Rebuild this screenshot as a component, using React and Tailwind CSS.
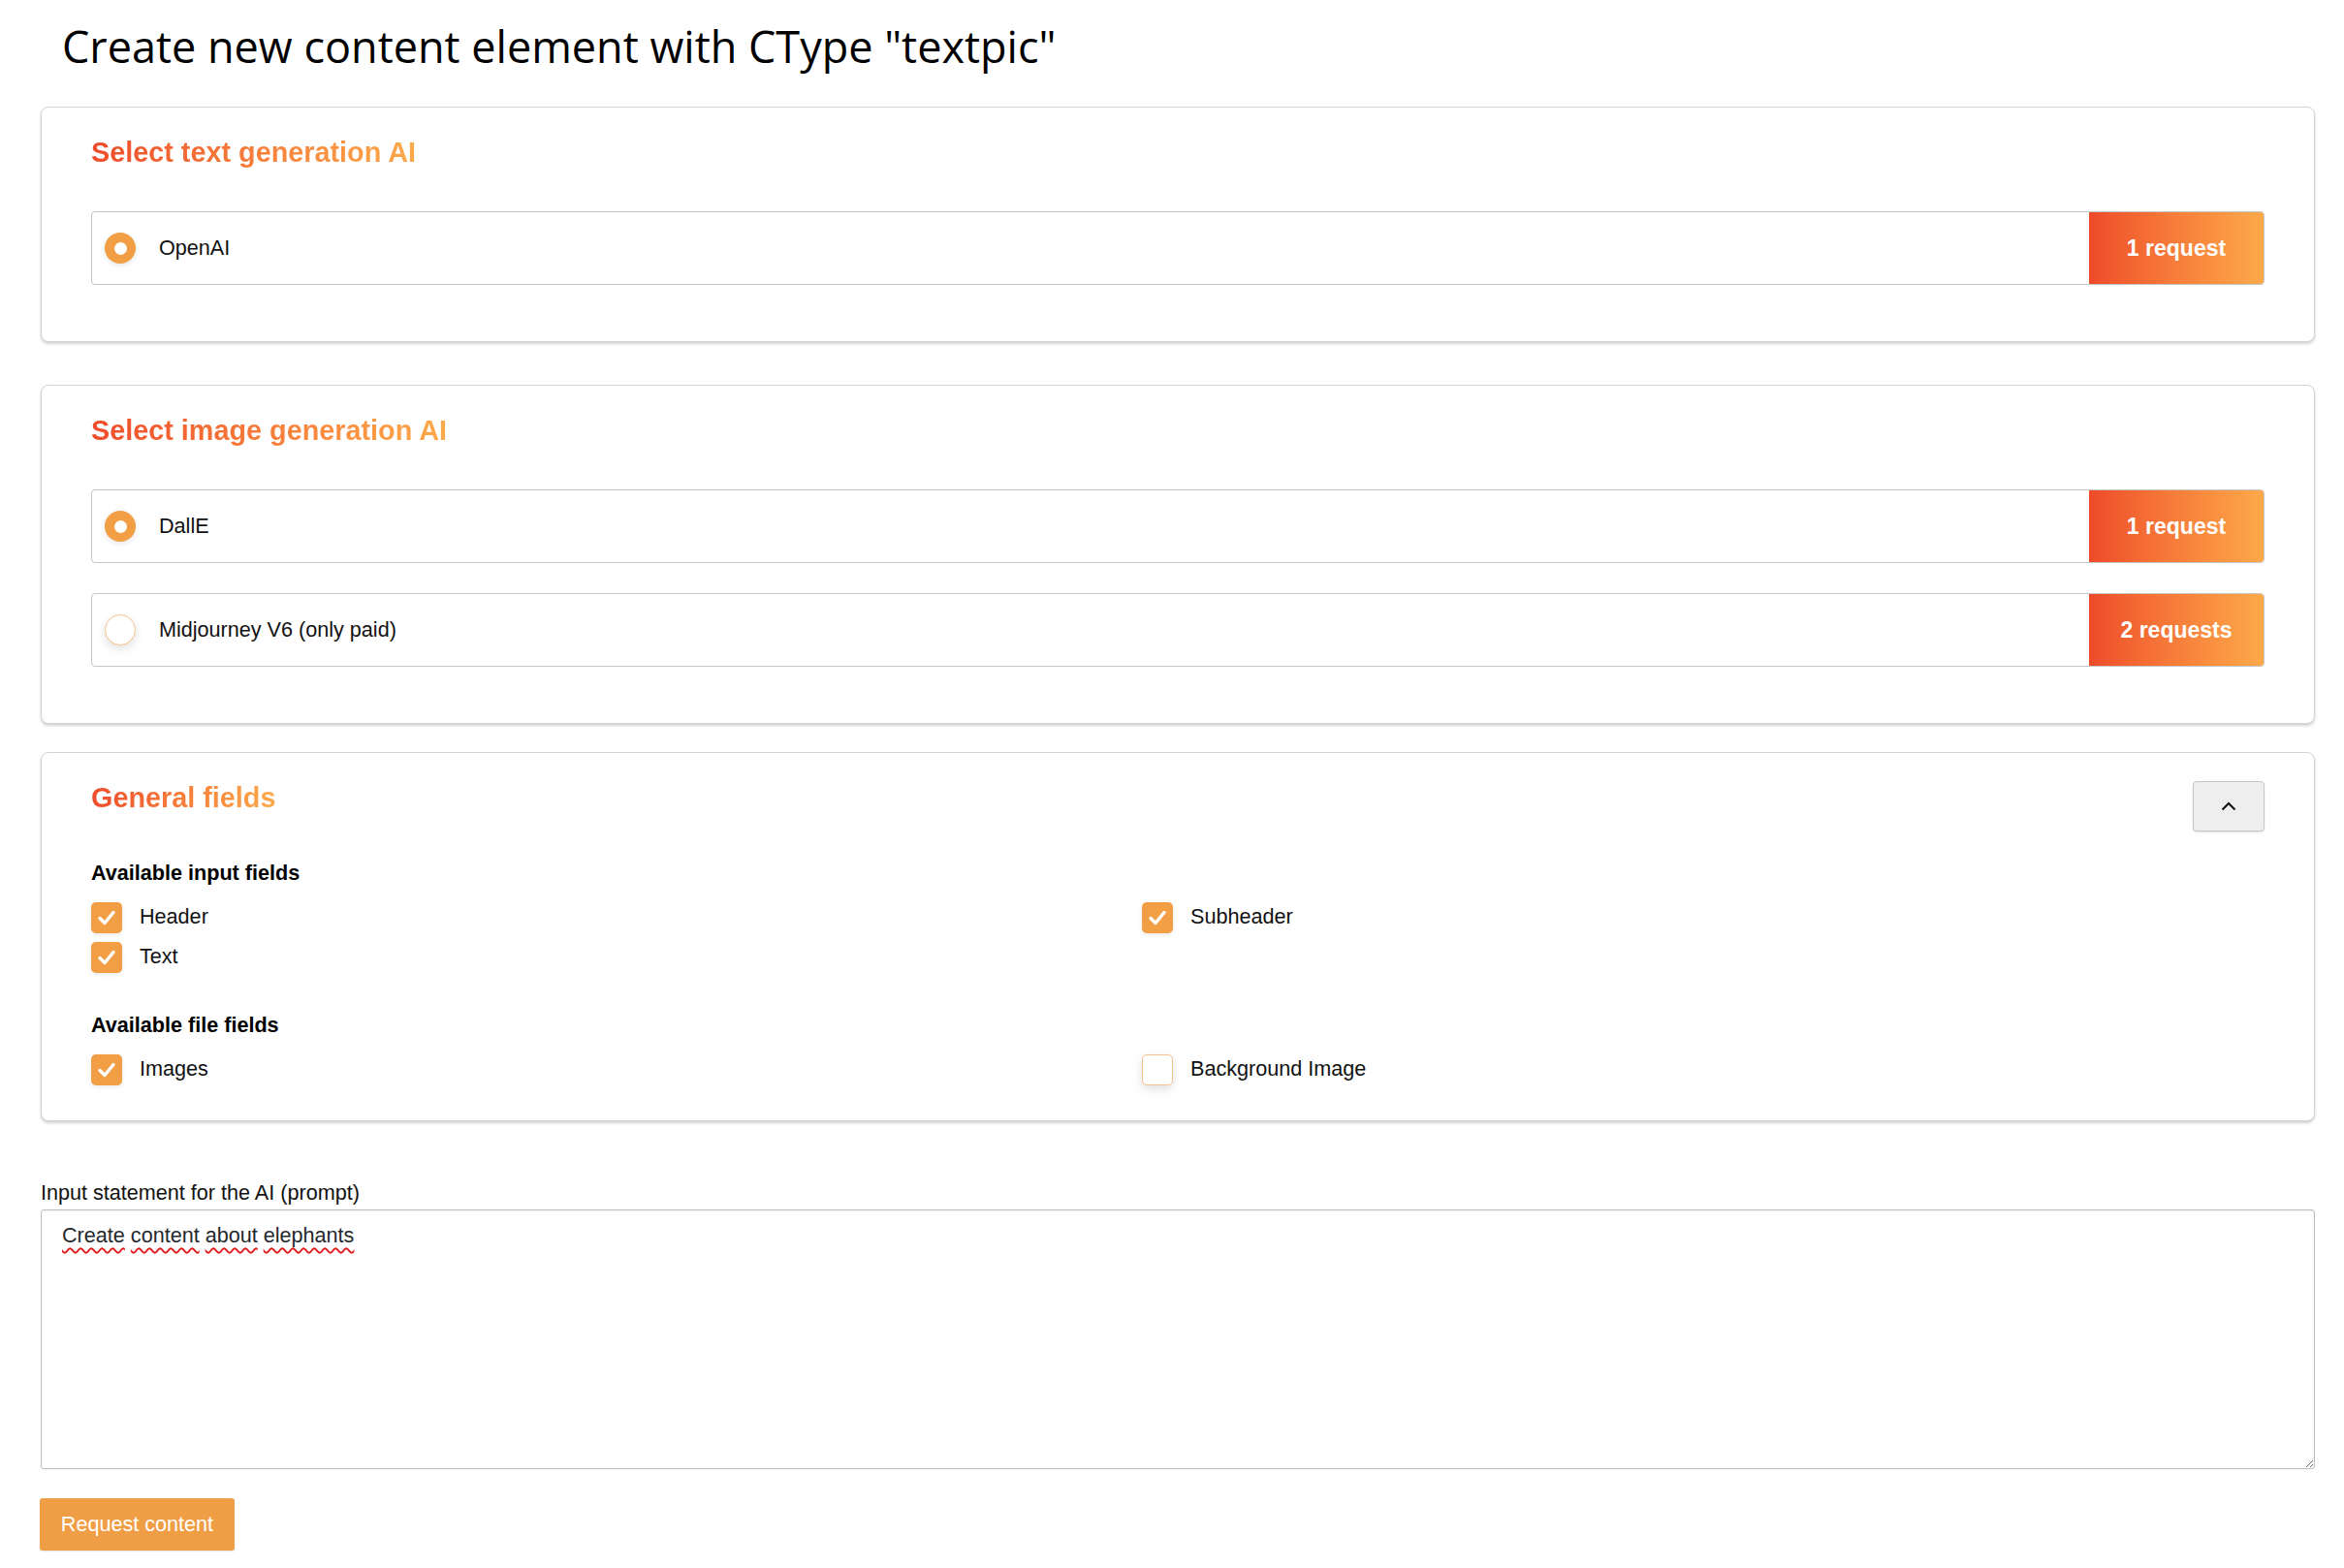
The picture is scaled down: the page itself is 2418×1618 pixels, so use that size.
import React from "react";

function Radio({ checked }) {
  if (checked) {
    return (
      <div className="w-[32px] h-[32px] rounded-full bg-[#f19e45] flex items-center justify-center shrink-0 shadow-[0_2px_6px_rgba(0,0,0,0.10)]">
        <div className="w-[13px] h-[13px] rounded-full bg-white" />
      </div>
    );
  }
  return (
    <div className="w-[32px] h-[32px] rounded-full bg-white border border-[#f6c28c] shrink-0 shadow-[0_4px_10px_rgba(0,0,0,0.12)]" />
  );
}

function Checkbox({ checked }) {
  if (checked) {
    return (
      <div className="w-[32px] h-[32px] rounded-[5px] bg-[#f19e45] flex items-center justify-center shrink-0 shadow-[0_2px_5px_rgba(0,0,0,0.08)]">
        <svg width="22" height="22" viewBox="0 0 22 22" fill="none">
          <path d="M4 11.5 L9 16.5 L18 5.5" stroke="white" strokeWidth="3.4" strokeLinecap="round" strokeLinejoin="round" />
        </svg>
      </div>
    );
  }
  return (
    <div className="w-[32px] h-[32px] rounded-[5px] bg-white border border-[#f6c28c] shrink-0 shadow-[0_4px_10px_rgba(0,0,0,0.12)]" />
  );
}

function OptionRow({ label, badge, checked }) {
  return (
    <div className="flex h-[76px] border border-[#c4c4c4] rounded-[4px] bg-white overflow-hidden">
      <div className="flex-1 flex items-center pl-[13px] gap-[24px]">
        <Radio checked={checked} />
        <span className="text-[21.6px] text-[#111]">{label}</span>
      </div>
      <div className="w-[180px] flex items-center justify-center bg-linear-to-r from-[#ee4a2a] to-[#fca94a] text-white font-bold text-[23px]">
        {badge}
      </div>
    </div>
  );
}

function Heading({ children }) {
  return (
    <h2 className="text-[28.8px] leading-[34px] font-bold">
      <span className="inline-block bg-linear-to-r from-[#ee4a2a] to-[#fca94a] bg-clip-text text-transparent">
        {children}
      </span>
    </h2>
  );
}

function CheckItem({ label, checked }) {
  return (
    <div className="flex items-center gap-[18px] h-[33px]">
      <Checkbox checked={checked} />
      <span className="text-[21.6px] text-[#111]">{label}</span>
    </div>
  );
}

const cardCls =
  "border border-[#d3d3d3] rounded-[8px] bg-white shadow-[0_2px_3px_rgba(0,0,0,0.18)] px-[51px] pt-[29px]";

export default function App() {
  const words = ["Create", "content", "about", "elephants"];
  return (
    <div
      className="min-h-screen bg-white pl-[42px] pr-[30px] text-black"
      style={{ fontFamily: '"Liberation Sans", Arial, sans-serif' }}
    >
      <h1
        className="pl-[22px] pt-[20px] text-[45px] leading-[56px] font-normal text-black"
        style={{ fontFamily: '"Open Sans", "Noto Sans", sans-serif' }}
      >
        Create new content element with CType "textpic"
      </h1>

      <section className={cardCls + " mt-[34px] pb-[58px]"}>
        <Heading>Select text generation AI</Heading>
        <div className="mt-[44px] flex flex-col gap-[31px]">
          <OptionRow label="OpenAI" badge="1 request" checked />
        </div>
      </section>

      <section className={cardCls + " mt-[44px] pb-[58px]"}>
        <Heading>Select image generation AI</Heading>
        <div className="mt-[44px] flex flex-col gap-[31px]">
          <OptionRow label="DallE" badge="1 request" checked />
          <OptionRow label="Midjourney V6 (only paid)" badge="2 requests" checked={false} />
        </div>
      </section>

      <section className={cardCls + " mt-[29px] pb-[36px]"}>
        <div className="flex justify-between items-start">
          <Heading>General fields</Heading>
          <button className="w-[74px] h-[52px] rounded-[4px] border border-[#c6c6c6] bg-[#eeeeee] flex items-center justify-center shadow-[0_1px_2px_rgba(0,0,0,0.12)]">
            <svg width="16" height="10" viewBox="0 0 16 10" fill="none">
              <path d="M1.5 8.5 L8 2 L14.5 8.5" stroke="#111" strokeWidth="2" />
            </svg>
          </button>
        </div>
        <div className="mt-[28px] text-[21.6px] leading-[30px] font-bold">Available input fields</div>
        <div className="mt-[14px] grid grid-cols-[1084px_1fr]">
          <div className="flex flex-col gap-[8px]">
            <CheckItem label="Header" checked />
            <CheckItem label="Text" checked />
          </div>
          <div className="flex flex-col gap-[8px]">
            <CheckItem label="Subheader" checked />
          </div>
        </div>
        <div className="mt-[39px] text-[21.6px] leading-[30px] font-bold">Available file fields</div>
        <div className="mt-[14px] grid grid-cols-[1084px_1fr]">
          <CheckItem label="Images" checked />
          <CheckItem label="Background Image" checked={false} />
        </div>
      </section>

      <div className="mt-[59px] text-[21.6px] leading-[30px] text-[#111]">Input statement for the AI (prompt)</div>
      <div className="mt-[2px] h-[268px] border border-[#bdbdbd] rounded-[3px] bg-white pl-[21px] pt-[11px] text-[21.6px] leading-[30px] text-[#25282d] resize overflow-auto shadow-[inset_0_1px_2px_rgba(0,0,0,0.08)]">
        {words.map((w, i) => (
          <React.Fragment key={w}>
            <span className="underline decoration-wavy decoration-[#e01b1b] decoration-[1.5px] underline-offset-[5px]">{w}</span>
            {i < words.length - 1 ? " " : ""}
          </React.Fragment>
        ))}
      </div>
      <button className="mt-[30px] -ml-px w-[201px] h-[54px] rounded-[3px] bg-[#f09e45] text-white text-[21.6px] shadow-[0_1px_2px_rgba(0,0,0,0.1)]">
        Request content
      </button>
    </div>
  );
}
